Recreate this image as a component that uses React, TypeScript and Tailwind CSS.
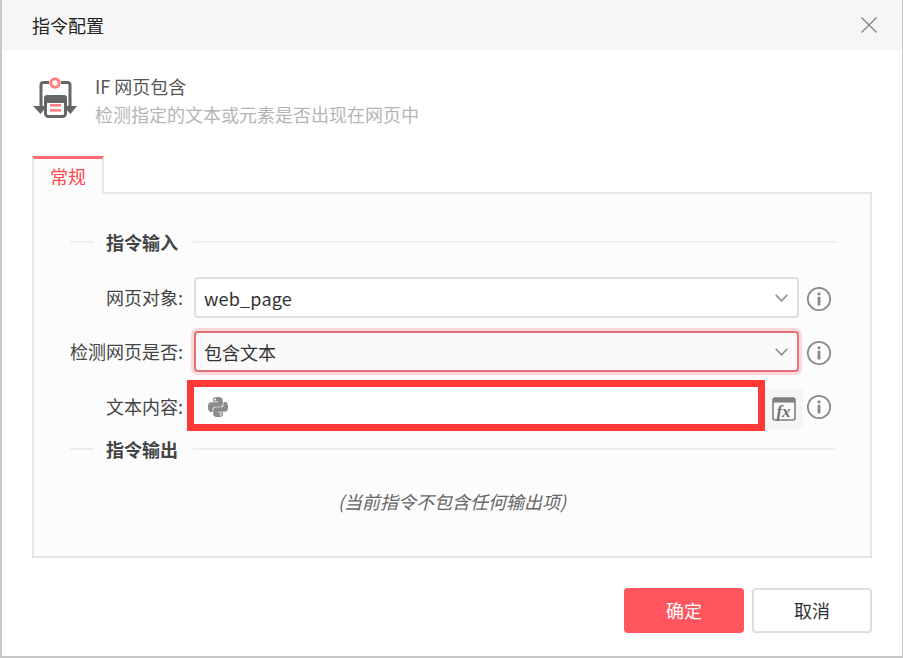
import React from "react";

const font = { fontFamily: '"Noto Sans CJK SC", "Noto Sans", sans-serif' };

function Chevron() {
  return (
    <svg width="13" height="8" viewBox="0 0 13 8" fill="none" className="shrink-0">
      <path d="M0.7 0.7 L6.500 6.900 L12.300 0.700" stroke="#8f8f8f" strokeWidth="1.6" />
    </svg>
  );
}

function Info() {
  return (
    <svg width="26" height="26" viewBox="0 0 26 26" fill="none" className="shrink-0">
      <circle cx="13" cy="13" r="11.2" stroke="#888888" strokeWidth="1.7" />
      <circle cx="13" cy="7.8" r="1.6" fill="#888888" />
      <rect x="11.6" y="10.8" width="2.8" height="8.6" rx="0.6" fill="#888888" />
    </svg>
  );
}

function SectionTitle({ text }: { text: string }) {
  return (
    <div className="flex items-center h-6">
      <div className="w-6 h-[2px] bg-[#eeeeee]" />
      <div className="ml-3 mr-[15px] text-[18px] font-bold text-[#444444] leading-6">{text}</div>
      <div className="flex-1 h-[2px] bg-[#eeeeee]" />
    </div>
  );
}

function Label({ text }: { text: string }) {
  return <div className="w-[149px] mr-[1px] text-right text-[18px] text-[#444444] shrink-0 whitespace-nowrap">{text}</div>;
}

export default function App() {
  return (
    <div style={font} className="w-[903px] h-[658px] bg-white flex flex-col border-l-2 border-r border-b-2 border-[#c8c8c8] overflow-hidden">
      <div className="h-[50px] shrink-0 bg-[#f6f6f6] flex items-center justify-between pl-[30px] pr-[24px]">
        <div className="text-[18px] text-[#222222]">指令配置</div>
        <svg width="18" height="18" viewBox="0 0 18 18" fill="none">
          <path d="M1.5 1.5 L16.5 16.5 M16.5 1.5 L1.5 16.5" stroke="#808080" strokeWidth="1.3" />
        </svg>
      </div>

      <div className="flex pl-[30px] pt-[24px] h-[106px] shrink-0">
        <svg width="46" height="44" viewBox="0 0 46 44" fill="none" className="mt-[2px] shrink-0">
          <path d="M9 32 V9 Q9 6.500 11.500 6.500 H17 M29 6.500 H35.500 Q38 6.500 38 9 V32" stroke="#666666" strokeWidth="3" />
          <path d="M1 30 H15 L8.500 38 Z M31 30 H45 L38.500 38 Z" fill="#666666" />
          <circle cx="23" cy="7" r="4.2" stroke="#ff7f80" strokeWidth="3" fill="white" />
          <rect x="13.500" y="20.500" width="20" height="20" rx="3" fill="white" stroke="#666666" strokeWidth="3" />
          <rect x="12" y="19" width="23" height="8" rx="3" fill="#666666" />
          <rect x="18" y="28" width="11" height="2.600" fill="#ff7f80" />
          <rect x="18" y="33" width="11" height="2.600" fill="#ff7f80" />
        </svg>
        <div className="ml-[17px]">
          <div className="text-[18px] leading-[28px] text-[#555555] -mt-[2px]">IF 网页包含</div>
          <div className="text-[18px] leading-[28px] text-[#b5b5b5]">检测指定的文本或元素是否出现在网页中</div>
        </div>
      </div>

      <div className="ml-[30px] mr-[30px] flex flex-col h-[402px] shrink-0">
        <div className="w-[72px] h-[38px] -mb-[2px] relative z-10 bg-[#fcfcfc] border-t-[3px] border-t-[#ff6b6f] border-x-2 border-x-[#e6e6e6] flex items-center justify-center text-[18px] text-[#ff4650]">
          常规
        </div>
        <div className="flex-1 border-2 border-[#e6e6e6] bg-[#fcfcfc] pl-[36px] pr-[35px] pt-[36px]">
          <SectionTitle text="指令输入" />
          <div className="-ml-[36px] mt-[23px] flex items-center h-[41px]">
            <Label text="网页对象:" />
            <div className="ml-[10px] w-[605px] h-[41px] bg-white border-2 border-[#dddddd] rounded-[4px] flex items-center justify-between pl-2 pr-[9px] text-[18px] tracking-[0.2px] text-[#333333]">
              <span className="pt-[2px]">web_page</span>
              <Chevron />
            </div>
            <div className="ml-[7px] mt-[3px]"><Info /></div>
          </div>
          <div className="-ml-[36px] mt-[13px] flex items-center h-[41px]">
            <Label text="检测网页是否:" />
            <div className="ml-[10px] w-[605px] h-[41px] bg-[#fafafa] border-2 border-[#e5717a] rounded-[4px] shadow-[0_0_0_3px_#ffd9d9] flex items-center justify-between pl-2 pr-[9px] text-[18px] text-[#333333]">
              <span className="pt-[1px]">包含文本</span>
              <Chevron />
            </div>
            <div className="ml-[7px] mt-[3px]"><Info /></div>
          </div>
          <div className="-ml-[36px] mt-[13px] flex items-center h-[44px] relative">
            <div className="-mt-[2px]"><Label text="文本内容:" /></div>
            <div className="ml-[10px] w-[571px] h-[41px] bg-white flex items-center pl-[13px]">
              <svg width="22" height="22" viewBox="0 0 24 24" fill="#8c8c8c">
                <path d="M11.9 1C6.3 1 6.6 3.4 6.6 3.4v2.5H12v.8H4.500S1 6.300 1 12s3.100 5.500 3.100 5.500H6v-2.700s-.1-3.100 3-3.100h5.300s2.900 0 2.900-2.800V4.100S17.600 1 11.900 1zM8.900 2.800a1 1 0 1 1 0 2 1 1 0 0 1 0-2z" />
                <path d="M12.100 23c5.600 0 5.300-2.400 5.300-2.400v-2.500H12v-.8h7.500S23 17.700 23 12s-3.100-5.500-3.100-5.500H18v2.700s.1 3.100-3 3.100H9.700s-2.900 0-2.900 2.800v4.800S6.400 23 12.100 23zm3-1.800a1 1 0 1 1 0-2 1 1 0 0 1 0 2z" />
              </svg>
            </div>
            <div className="w-[38px] h-[40px] self-end bg-[#f5f5f5] flex items-center justify-center shrink-0">
              <svg width="24" height="24" viewBox="0 0 24 24" fill="none">
                <rect x="1" y="1" width="22" height="22" rx="2" stroke="#808080" strokeWidth="1.6" fill="#fafafa" />
                <rect x="1" y="1" width="22" height="4.500" fill="#808080" />
                <text x="11.500" y="20" textAnchor="middle" fontSize="17" fontStyle="italic" fontWeight="700" fontFamily='"Liberation Serif", serif' fill="#707070">fx</text>
              </svg>
            </div>
            <div className="ml-[3px]"><Info /></div>
            <div className="absolute left-[153px] top-[-5px] w-[578px] h-[51px] border-[7px] border-[#ff3838] pointer-events-none" />
          </div>
          <div className="mt-[8px]">
            <SectionTitle text="指令输出" />
          </div>
          <div className="mt-[28px] text-center text-[18px] italic text-[#666666] leading-6 -ml-[36px] -mr-[35px]">(当前指令不包含任何输出项)</div>
        </div>
      </div>

      <div className="flex justify-end gap-2 pr-[30px] pt-[30px]">
        <div className="w-[120px] h-[45px] rounded-[4px] bg-[#ff555e] text-white text-[18px] flex items-center justify-center">确定</div>
        <div className="w-[120px] h-[45px] rounded-[4px] bg-white border-2 border-[#dddddd] text-[#333333] text-[18px] flex items-center justify-center">取消</div>
      </div>
    </div>
  );
}
